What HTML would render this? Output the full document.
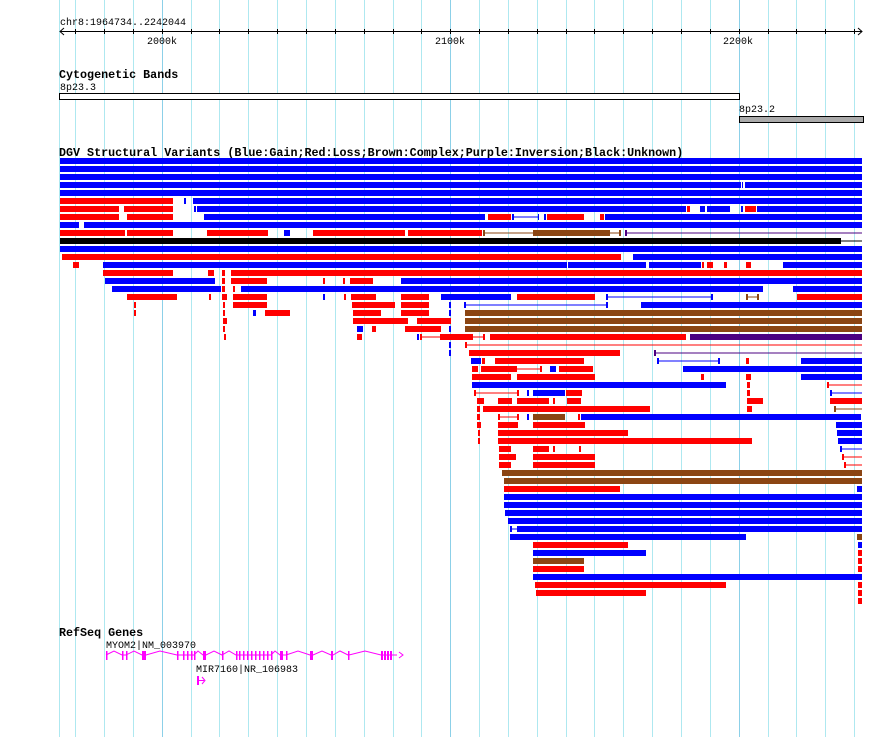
<!DOCTYPE html>
<html><head><meta charset="utf-8">
<style>
html,body{margin:0;padding:0;background:#fff;width:890px;height:737px;overflow:hidden}
svg{display:block}
.b{fill:#0000ff}.r{fill:#ff0000}.n{fill:#8b4513}.p{fill:#4b0082}.k{fill:#000}
text{font-family:"Liberation Mono","DejaVu Sans Mono",monospace;font-size:10px;fill:#000}
.t{font-weight:bold;font-size:11.7px}
</style></head><body>
<svg width="890" height="737" viewBox="0 0 890 737" xmlns="http://www.w3.org/2000/svg">
<g stroke="#aee8f0" stroke-width="1">
<line x1="59.5" y1="0" x2="59.5" y2="737"/><line x1="75.5" y1="0" x2="75.5" y2="737"/><line x1="104.5" y1="0" x2="104.5" y2="737"/><line x1="133.5" y1="0" x2="133.5" y2="737"/>
<line x1="191.5" y1="0" x2="191.5" y2="737"/><line x1="219.5" y1="0" x2="219.5" y2="737"/><line x1="248.5" y1="0" x2="248.5" y2="737"/><line x1="277.5" y1="0" x2="277.5" y2="737"/><line x1="306.5" y1="0" x2="306.5" y2="737"/><line x1="335.5" y1="0" x2="335.5" y2="737"/><line x1="364.5" y1="0" x2="364.5" y2="737"/><line x1="393.5" y1="0" x2="393.5" y2="737"/><line x1="421.5" y1="0" x2="421.5" y2="737"/>
<line x1="479.5" y1="0" x2="479.5" y2="737"/><line x1="508.5" y1="0" x2="508.5" y2="737"/><line x1="537.5" y1="0" x2="537.5" y2="737"/><line x1="566.5" y1="0" x2="566.5" y2="737"/><line x1="594.5" y1="0" x2="594.5" y2="737"/><line x1="623.5" y1="0" x2="623.5" y2="737"/><line x1="652.5" y1="0" x2="652.5" y2="737"/><line x1="681.5" y1="0" x2="681.5" y2="737"/><line x1="710.5" y1="0" x2="710.5" y2="737"/>
<line x1="768.5" y1="0" x2="768.5" y2="737"/><line x1="796.5" y1="0" x2="796.5" y2="737"/><line x1="825.5" y1="0" x2="825.5" y2="737"/><line x1="854.5" y1="0" x2="854.5" y2="737"/>
</g>
<g stroke="#8cd0e8" stroke-width="1"><line x1="162.5" y1="0" x2="162.5" y2="737"/><line x1="450.5" y1="0" x2="450.5" y2="737"/><line x1="739.5" y1="0" x2="739.5" y2="737"/></g>

<text x="60" y="25">chr8:1964734..2242044</text>
<g stroke="#000" stroke-width="1">
<line x1="60" y1="31.5" x2="862" y2="31.5"/>
<polyline points="64,28 60,31.5 64,35" fill="none"/><polyline points="858,28 862,31.5 858,35" fill="none"/>
<line x1="75.5" y1="29" x2="75.5" y2="34"/><line x1="104.5" y1="29" x2="104.5" y2="34"/><line x1="133.5" y1="29" x2="133.5" y2="34"/><line x1="162.5" y1="29" x2="162.5" y2="34"/><line x1="191.5" y1="29" x2="191.5" y2="34"/><line x1="219.5" y1="29" x2="219.5" y2="34"/><line x1="248.5" y1="29" x2="248.5" y2="34"/><line x1="277.5" y1="29" x2="277.5" y2="34"/><line x1="306.5" y1="29" x2="306.5" y2="34"/><line x1="335.5" y1="29" x2="335.5" y2="34"/><line x1="364.5" y1="29" x2="364.5" y2="34"/><line x1="393.5" y1="29" x2="393.5" y2="34"/><line x1="421.5" y1="29" x2="421.5" y2="34"/><line x1="450.5" y1="29" x2="450.5" y2="34"/><line x1="479.5" y1="29" x2="479.5" y2="34"/><line x1="508.5" y1="29" x2="508.5" y2="34"/><line x1="537.5" y1="29" x2="537.5" y2="34"/><line x1="566.5" y1="29" x2="566.5" y2="34"/><line x1="594.5" y1="29" x2="594.5" y2="34"/><line x1="623.5" y1="29" x2="623.5" y2="34"/><line x1="652.5" y1="29" x2="652.5" y2="34"/><line x1="681.5" y1="29" x2="681.5" y2="34"/><line x1="710.5" y1="29" x2="710.5" y2="34"/><line x1="739.5" y1="29" x2="739.5" y2="34"/><line x1="768.5" y1="29" x2="768.5" y2="34"/><line x1="796.5" y1="29" x2="796.5" y2="34"/><line x1="825.5" y1="29" x2="825.5" y2="34"/><line x1="854.5" y1="29" x2="854.5" y2="34"/>
</g>
<text x="147" y="44">2000k</text><text x="435" y="44">2100k</text><text x="723" y="44">2200k</text>

<text x="59" y="78" class="t">Cytogenetic Bands</text>
<text x="60" y="90">8p23.3</text>
<rect x="59.5" y="93.5" width="680" height="6" fill="#fff" stroke="#000"/>
<text x="739" y="112">8p23.2</text>
<rect x="739.5" y="116.5" width="124" height="6" fill="#aaa" stroke="#000"/>

<text x="59" y="156" class="t">DGV Structural Variants (Blue:Gain;Red:Loss;Brown:Complex;Purple:Inversion;Black:Unknown)</text>

<g>
<g transform="translate(0,158)"><rect class="b" x="60" width="802" height="6"/></g>
<g transform="translate(0,166)"><rect class="b" x="60" width="802" height="6"/></g>
<g transform="translate(0,174)"><rect class="b" x="60" width="802" height="6"/></g>
<g transform="translate(0,182)"><rect class="b" x="60" width="681" height="6"/><rect class="b" x="742" width="1" height="6"/><rect class="b" x="745" width="117" height="6"/></g>
<g transform="translate(0,190)"><rect class="b" x="60" width="802" height="6"/></g>
<g transform="translate(0,198)"><rect class="r" x="60" width="113" height="6"/><rect class="b" x="184" width="2" height="6"/><rect class="b" x="193" width="669" height="6"/></g>
<g transform="translate(0,206)"><rect class="r" x="60" width="59" height="6"/><rect class="r" x="124" width="49" height="6"/><rect class="b" x="194" width="2" height="6"/><rect class="b" x="197" width="489" height="6"/><rect class="r" x="687" width="3" height="6"/><rect class="b" x="700" width="5" height="6"/><rect class="b" x="707" width="23" height="6"/><rect class="b" x="741" width="2" height="6"/><rect class="r" x="745" width="11" height="6"/><rect class="b" x="757" width="105" height="6"/></g>
<g transform="translate(0,214)"><rect class="r" x="60" width="59" height="6"/><rect class="r" x="127" width="46" height="6"/><rect class="b" x="204" width="281" height="6"/><rect class="r" x="488" width="23" height="6"/><rect class="b" x="512" width="2" height="6"/><rect class="b" x="513" y="2.5" width="26" height="1"/><rect class="b" x="538" width="1" height="6"/><rect class="b" x="544" width="2" height="6"/><rect class="r" x="547" width="37" height="6"/><rect class="r" x="600" width="4" height="6"/><rect class="b" x="605" width="257" height="6"/></g>
<g transform="translate(0,222)"><rect class="b" x="60" width="19" height="6"/><rect class="b" x="84" width="778" height="6"/></g>
<g transform="translate(0,230)"><rect class="r" x="60" width="65" height="6"/><rect class="r" x="127" width="46" height="6"/><rect class="r" x="207" width="61" height="6"/><rect class="b" x="284" width="6" height="6"/><rect class="r" x="313" width="92" height="6"/><rect class="r" x="408" width="74" height="6"/><rect class="n" x="483" width="2" height="6"/><rect class="n" x="484" y="2.5" width="137" height="1"/><rect class="n" x="533" width="77" height="6"/><rect class="n" x="619" width="2" height="6"/><rect class="p" x="625" width="2" height="6"/><rect class="p" x="626" y="2.5" width="236" height="1"/></g>
<g transform="translate(0,238)"><rect class="k" x="60" width="781" height="6"/><rect class="k" x="841" y="2.5" width="21" height="1"/></g>
<g transform="translate(0,246)"><rect class="b" x="60" width="802" height="6"/></g>
<g transform="translate(0,254)"><rect class="r" x="62" width="559" height="6"/><rect class="b" x="633" width="229" height="6"/></g>
<g transform="translate(0,262)"><rect class="r" x="73" width="6" height="6"/><rect class="b" x="103" width="464" height="6"/><rect class="b" x="568" width="78" height="6"/><rect class="b" x="649" width="52" height="6"/><rect class="r" x="702" width="2" height="6"/><rect class="r" x="707" width="6" height="6"/><rect class="r" x="724" width="3" height="6"/><rect class="r" x="746" width="5" height="6"/><rect class="b" x="783" width="79" height="6"/></g>
<g transform="translate(0,270)"><rect class="r" x="103" width="70" height="6"/><rect class="r" x="208" width="6" height="6"/><rect class="r" x="222" width="3" height="6"/><rect class="r" x="231" width="631" height="6"/></g>
<g transform="translate(0,278)"><rect class="b" x="105" width="110" height="6"/><rect class="r" x="222" width="3" height="6"/><rect class="r" x="231" width="36" height="6"/><rect class="r" x="323" width="2" height="6"/><rect class="r" x="343" width="2" height="6"/><rect class="r" x="350" width="23" height="6"/><rect class="b" x="401" width="461" height="6"/></g>
<g transform="translate(0,286)"><rect class="b" x="112" width="109" height="6"/><rect class="r" x="222" width="3" height="6"/><rect class="r" x="233" width="2" height="6"/><rect class="b" x="241" width="522" height="6"/><rect class="b" x="793" width="69" height="6"/></g>
<g transform="translate(0,294)"><rect class="r" x="127" width="50" height="6"/><rect class="r" x="209" width="2" height="6"/><rect class="r" x="222" width="5" height="6"/><rect class="r" x="233" width="34" height="6"/><rect class="b" x="323" width="2" height="6"/><rect class="r" x="344" width="2" height="6"/><rect class="r" x="351" width="25" height="6"/><rect class="r" x="401" width="28" height="6"/><rect class="b" x="441" width="70" height="6"/><rect class="r" x="517" width="78" height="6"/><rect class="b" x="606" width="2" height="6"/><rect class="b" x="606" y="2.5" width="106" height="1"/><rect class="b" x="711" width="2" height="6"/><rect class="n" x="746" width="2" height="6"/><rect class="n" x="746" y="2.5" width="12" height="1"/><rect class="n" x="757" width="2" height="6"/><rect class="r" x="797" width="65" height="6"/></g>
<g transform="translate(0,302)"><rect class="r" x="134" width="2" height="6"/><rect class="r" x="223" width="2" height="6"/><rect class="r" x="233" width="34" height="6"/><rect class="r" x="352" width="43" height="6"/><rect class="r" x="401" width="28" height="6"/><rect class="b" x="449" width="2" height="6"/><rect class="b" x="464" width="2" height="6"/><rect class="b" x="464" y="2.5" width="143" height="1"/><rect class="b" x="606" width="2" height="6"/><rect class="b" x="641" width="221" height="6"/></g>
<g transform="translate(0,310)"><rect class="r" x="134" width="2" height="6"/><rect class="r" x="223" width="2" height="6"/><rect class="b" x="253" width="3" height="6"/><rect class="r" x="265" width="25" height="6"/><rect class="r" x="353" width="28" height="6"/><rect class="r" x="401" width="28" height="6"/><rect class="b" x="449" width="2" height="6"/><rect class="n" x="465" width="397" height="6"/></g>
<g transform="translate(0,318)"><rect class="r" x="223" width="4" height="6"/><rect class="r" x="353" width="55" height="6"/><rect class="r" x="417" width="34" height="6"/><rect class="n" x="465" width="397" height="6"/></g>
<g transform="translate(0,326)"><rect class="r" x="223" width="2" height="6"/><rect class="b" x="357" width="6" height="6"/><rect class="r" x="372" width="4" height="6"/><rect class="r" x="405" width="36" height="6"/><rect class="b" x="449" width="2" height="6"/><rect class="n" x="465" width="397" height="6"/></g>
<g transform="translate(0,334)"><rect class="r" x="224" width="2" height="6"/><rect class="r" x="357" width="5" height="6"/><rect class="b" x="417" width="2" height="6"/><rect class="r" x="420" width="2" height="6"/><rect class="r" x="420" y="2.5" width="64" height="1"/><rect class="r" x="440" width="33" height="6"/><rect class="r" x="483" width="2" height="6"/><rect class="r" x="490" width="196" height="6"/><rect class="p" x="690" width="172" height="6"/></g>
<g transform="translate(0,342)"><rect class="b" x="449" width="2" height="6"/><rect class="r" x="465" width="2" height="6"/><rect class="r" x="466" y="2.5" width="396" height="1"/></g>
<g transform="translate(0,350)"><rect class="b" x="449" width="2" height="6"/><rect class="r" x="469" width="151" height="6"/><rect class="p" x="654" width="2" height="6"/><rect class="p" x="655" y="2.5" width="207" height="1"/></g>
<g transform="translate(0,358)"><rect class="b" x="471" width="10" height="6"/><rect class="r" x="482" width="3" height="6"/><rect class="r" x="495" width="89" height="6"/><rect class="b" x="657" width="2" height="6"/><rect class="b" x="657" y="2.5" width="62" height="1"/><rect class="b" x="718" width="2" height="6"/><rect class="r" x="746" width="3" height="6"/><rect class="b" x="801" width="61" height="6"/></g>
<g transform="translate(0,366)"><rect class="r" x="472" width="6" height="6"/><rect class="r" x="481" width="36" height="6"/><rect class="r" x="517" y="2.5" width="24" height="1"/><rect class="r" x="540" width="2" height="6"/><rect class="b" x="550" width="6" height="6"/><rect class="r" x="559" width="34" height="6"/><rect class="b" x="683" width="179" height="6"/></g>
<g transform="translate(0,374)"><rect class="r" x="472" width="39" height="6"/><rect class="r" x="517" width="78" height="6"/><rect class="r" x="701" width="3" height="6"/><rect class="r" x="746" width="5" height="6"/><rect class="b" x="801" width="61" height="6"/></g>
<g transform="translate(0,382)"><rect class="b" x="472" width="254" height="6"/><rect class="r" x="747" width="3" height="6"/><rect class="r" x="827" width="2" height="6"/><rect class="r" x="828" y="2.5" width="34" height="1"/></g>
<g transform="translate(0,390)"><rect class="r" x="474" width="2" height="6"/><rect class="r" x="474" y="2.5" width="44" height="1"/><rect class="r" x="517" width="2" height="6"/><rect class="b" x="527" width="2" height="6"/><rect class="b" x="533" width="32" height="6"/><rect class="r" x="566" width="16" height="6"/><rect class="r" x="747" width="3" height="6"/><rect class="b" x="830" width="2" height="6"/><rect class="b" x="831" y="2.5" width="31" height="1"/></g>
<g transform="translate(0,398)"><rect class="r" x="477" width="7" height="6"/><rect class="r" x="498" width="14" height="6"/><rect class="r" x="517" width="32" height="6"/><rect class="r" x="553" width="2" height="6"/><rect class="r" x="567" width="14" height="6"/><rect class="r" x="747" width="16" height="6"/><rect class="r" x="830" width="32" height="6"/></g>
<g transform="translate(0,406)"><rect class="r" x="477" width="3" height="6"/><rect class="r" x="483" width="167" height="6"/><rect class="r" x="747" width="5" height="6"/><rect class="n" x="834" width="2" height="6"/><rect class="n" x="835" y="2.5" width="27" height="1"/></g>
<g transform="translate(0,414)"><rect class="r" x="477" width="3" height="6"/><rect class="r" x="498" width="2" height="6"/><rect class="r" x="498" y="2.5" width="20" height="1"/><rect class="r" x="517" width="2" height="6"/><rect class="b" x="527" width="2" height="6"/><rect class="n" x="533" width="32" height="6"/><rect class="r" x="578" width="2" height="6"/><rect class="b" x="581" width="280" height="6"/></g>
<g transform="translate(0,422)"><rect class="r" x="477" width="4" height="6"/><rect class="r" x="498" width="20" height="6"/><rect class="r" x="533" width="52" height="6"/><rect class="b" x="836" width="26" height="6"/></g>
<g transform="translate(0,430)"><rect class="r" x="478" width="2" height="6"/><rect class="r" x="498" width="130" height="6"/><rect class="b" x="837" width="25" height="6"/></g>
<g transform="translate(0,438)"><rect class="r" x="478" width="2" height="6"/><rect class="r" x="498" width="254" height="6"/><rect class="b" x="838" width="24" height="6"/></g>
<g transform="translate(0,446)"><rect class="r" x="499" width="12" height="6"/><rect class="r" x="533" width="16" height="6"/><rect class="r" x="553" width="2" height="6"/><rect class="r" x="579" width="2" height="6"/><rect class="b" x="840" width="2" height="6"/><rect class="b" x="841" y="2.5" width="21" height="1"/></g>
<g transform="translate(0,454)"><rect class="r" x="499" width="17" height="6"/><rect class="r" x="533" width="62" height="6"/><rect class="r" x="842" width="2" height="6"/><rect class="r" x="843" y="2.5" width="19" height="1"/></g>
<g transform="translate(0,462)"><rect class="r" x="499" width="12" height="6"/><rect class="r" x="533" width="62" height="6"/><rect class="r" x="844" width="2" height="6"/><rect class="r" x="845" y="2.5" width="17" height="1"/></g>
<g transform="translate(0,470)"><rect class="n" x="502" width="360" height="6"/></g>
<g transform="translate(0,478)"><rect class="n" x="504" width="358" height="6"/></g>
<g transform="translate(0,486)"><rect class="r" x="504" width="116" height="6"/><rect class="b" x="857" width="5" height="6"/></g>
<g transform="translate(0,494)"><rect class="b" x="504" width="358" height="6"/></g>
<g transform="translate(0,502)"><rect class="b" x="504" width="358" height="6"/></g>
<g transform="translate(0,510)"><rect class="b" x="505" width="357" height="6"/></g>
<g transform="translate(0,518)"><rect class="b" x="508" width="354" height="6"/></g>
<g transform="translate(0,526)"><rect class="b" x="510" width="2" height="6"/><rect class="b" x="511" y="2.5" width="6" height="1"/><rect class="b" x="517" width="345" height="6"/></g>
<g transform="translate(0,534)"><rect class="b" x="510" width="236" height="6"/><rect class="n" x="857" width="5" height="6"/></g>
<g transform="translate(0,542)"><rect class="r" x="533" width="95" height="6"/><rect class="b" x="858" width="4" height="6"/></g>
<g transform="translate(0,550)"><rect class="b" x="533" width="113" height="6"/><rect class="r" x="858" width="4" height="6"/></g>
<g transform="translate(0,558)"><rect class="n" x="533" width="51" height="6"/><rect class="r" x="858" width="4" height="6"/></g>
<g transform="translate(0,566)"><rect class="r" x="533" width="51" height="6"/><rect class="r" x="858" width="4" height="6"/></g>
<g transform="translate(0,574)"><rect class="b" x="533" width="329" height="6"/></g>
<g transform="translate(0,582)"><rect class="r" x="535" width="191" height="6"/><rect class="r" x="858" width="4" height="6"/></g>
<g transform="translate(0,590)"><rect class="r" x="536" width="110" height="6"/><rect class="r" x="858" width="4" height="6"/></g>
<g transform="translate(0,598)"><rect class="r" x="858" width="4" height="6"/></g>
</g>

<text x="59" y="636" class="t">RefSeq Genes</text>
<text x="106" y="648">MYOM2|NM_003970</text>
<g fill="#ff00ff">
<polyline fill="none" stroke="#ff00ff" stroke-width="1" points="106,655 114,651 122,655 126,655 134,651 142,655 146,655 160,651 177,655 183,655 187,655 191,655 194,655 198,651 203,655 206,655 214,651 222,655 229,651 236,655 239,655 243,655 247,655 251,655 255,655 259,655 263,655 267,655 271,655 275,651 280,655 283,655 286,655 298,651 310,655 313,655 322,651 331,655 333,655 340,651 348,655 349,655 365,651 381,655 397,655"/>
<rect x="106" y="651" width="1.5" height="9"/><rect x="122" y="651" width="1.5" height="9"/><rect x="126" y="651" width="1.5" height="9"/><rect x="142" y="651" width="4" height="9"/>
<rect x="177" y="651" width="1.5" height="9"/><rect x="183" y="651" width="1.5" height="9"/><rect x="187" y="651" width="1.5" height="9"/><rect x="191" y="651" width="1.5" height="9"/><rect x="194" y="651" width="1.5" height="9"/><rect x="203" y="651" width="3" height="9"/>
<rect x="222" y="651" width="1.5" height="9"/><rect x="236" y="651" width="1.5" height="9"/><rect x="239" y="651" width="1.5" height="9"/><rect x="243" y="651" width="1.5" height="9"/><rect x="247" y="651" width="1.5" height="9"/><rect x="251" y="651" width="1.5" height="9"/><rect x="255" y="651" width="1.5" height="9"/><rect x="259" y="651" width="1.5" height="9"/><rect x="263" y="651" width="1.5" height="9"/><rect x="267" y="651" width="1.5" height="9"/><rect x="271" y="651" width="1.5" height="9"/>
<rect x="280" y="651" width="3" height="9"/><rect x="286" y="651" width="1.5" height="9"/><rect x="310" y="651" width="3" height="9"/><rect x="331" y="651" width="2" height="9"/><rect x="348" y="651" width="1.5" height="9"/>
<rect x="381" y="651" width="2" height="9"/><rect x="384" y="651" width="2" height="9"/><rect x="387" y="651" width="2" height="9"/><rect x="390" y="651" width="2" height="9"/>
<polyline fill="none" stroke="#ff00ff" stroke-width="1" points="399,652 403,655 399,658"/>
</g>
<text x="196" y="672">MIR7160|NR_106983</text>
<g fill="#ff00ff"><rect x="197" y="676" width="2" height="9"/><rect x="199" y="680" width="5" height="1"/><polyline fill="none" stroke="#ff00ff" stroke-width="1" points="202,677 205,680.5 202,684"/></g>
</svg>
</body></html>
